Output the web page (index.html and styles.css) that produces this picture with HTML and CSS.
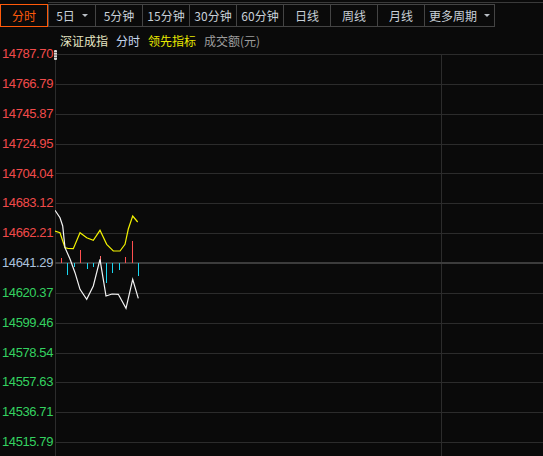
FILE: index.html
```html
<!DOCTYPE html>
<html lang="zh-CN">
<head>
<meta charset="utf-8">
<title>分时</title>
<link rel="stylesheet" href="styles.css">
</head>
<body>
<div class="topline"></div>
<div class="tabs">
  <div class="tab active">分时</div>
  <div class="tab">5日<span class="caret"></span></div>
  <div class="tab">5分钟</div>
  <div class="tab">15分钟</div>
  <div class="tab">30分钟</div>
  <div class="tab">60分钟</div>
  <div class="tab">日线</div>
  <div class="tab">周线</div>
  <div class="tab">月线</div>
  <div class="tab wide">更多周期<span class="caret"></span></div>
</div>
<div class="legend">
  <span class="lg-index">深证成指</span>
  <span class="lg-time">分时</span>
  <span class="lg-lead">领先指标</span>
  <span class="lg-amount">成交额(元)</span>
</div>
<div class="chart">
  <ul class="yaxis">
    <li class="up">14787.70</li>
    <li class="up">14766.79</li>
    <li class="up">14745.87</li>
    <li class="up">14724.95</li>
    <li class="up">14704.04</li>
    <li class="up">14683.12</li>
    <li class="up">14662.21</li>
    <li class="mid">14641.29</li>
    <li class="down">14620.37</li>
    <li class="down">14599.46</li>
    <li class="down">14578.54</li>
    <li class="down">14557.63</li>
    <li class="down">14536.71</li>
    <li class="down">14515.79</li>
  </ul>
  <span class="grip">
    <svg width="5" height="10" viewBox="0 0 5 10">
      <rect x="1" y="0" width="3" height="10" rx="1" fill="#d8d8d8"/>
      <rect x="1" y="2" width="3" height="1" fill="#6a6a6a"/>
      <rect x="1" y="4.5" width="3" height="1" fill="#6a6a6a"/>
      <rect x="1" y="7" width="3" height="1" fill="#6a6a6a"/>
    </svg>
  </span>
  <div class="plot">
    <svg class="plot-svg" width="488" height="403" viewBox="0 0 488 403">
      <g stroke="#2c2c2c" stroke-width="1" shape-rendering="crispEdges">
        <line x1="0" y1="0.5" x2="488" y2="0.5"/>
        <line x1="0" y1="30.35" x2="488" y2="30.35"/>
        <line x1="0" y1="60.2" x2="488" y2="60.2"/>
        <line x1="0" y1="90.05" x2="488" y2="90.05"/>
        <line x1="0" y1="119.9" x2="488" y2="119.9"/>
        <line x1="0" y1="149.75" x2="488" y2="149.75"/>
        <line x1="0" y1="179.6" x2="488" y2="179.6"/>
        <line x1="0" y1="239.3" x2="488" y2="239.3"/>
        <line x1="0" y1="269.15" x2="488" y2="269.15"/>
        <line x1="0" y1="299" x2="488" y2="299"/>
        <line x1="0" y1="328.85" x2="488" y2="328.85"/>
        <line x1="0" y1="358.7" x2="488" y2="358.7"/>
        <line x1="0" y1="388.55" x2="488" y2="388.55"/>
        <line x1="0.5" y1="0" x2="0.5" y2="403"/>
        <line x1="386.5" y1="0" x2="386.5" y2="403"/>
      </g>
      <rect x="0" y="208" width="488" height="2" fill="#3c3c3c" shape-rendering="crispEdges"/>
      <g stroke-width="1" shape-rendering="crispEdges">
        <line x1="6.5" y1="203.5" x2="6.5" y2="209" stroke="#ff4f4f"/>
        <line x1="25.5" y1="196" x2="25.5" y2="209" stroke="#ff4f4f"/>
        <line x1="45.5" y1="202" x2="45.5" y2="209" stroke="#ff6b6b"/>
        <line x1="70.5" y1="202.5" x2="70.5" y2="209" stroke="#ff4f4f"/>
        <line x1="77.5" y1="187" x2="77.5" y2="209" stroke="#ff4f4f"/>
        <line x1="12.5" y1="209" x2="12.5" y2="220.5" stroke="#19d6f0"/>
        <line x1="19.5" y1="209" x2="19.5" y2="213" stroke="#19d6f0"/>
        <line x1="32.5" y1="209" x2="32.5" y2="214.5" stroke="#19d6f0"/>
        <line x1="38.5" y1="209" x2="38.5" y2="213" stroke="#19d6f0"/>
        <line x1="51.5" y1="209" x2="51.5" y2="228.5" stroke="#19d6f0"/>
        <line x1="57.5" y1="209" x2="57.5" y2="218.5" stroke="#19d6f0"/>
        <line x1="64.5" y1="209" x2="64.5" y2="215.5" stroke="#19d6f0"/>
        <line x1="83.5" y1="209" x2="83.5" y2="222" stroke="#19d6f0"/>
      </g>
      <polyline fill="none" stroke="#f2f200" stroke-width="1.2" points="0,177 5,178.7 10,193.7 13.3,194.5 18.3,194.7 25,178.7 31.7,183.7 38.3,186.3 45,176.3 51.7,190.3 58.3,197 65,197 70,190.3 73.3,175 77.7,162 82.7,168"/>
      <polyline fill="none" stroke="#f4f4f4" stroke-width="1.2" points="0,156.3 5,163.7 7.7,172 10,193.7 15,205 20,218.7 25,235.3 31.7,245.3 38.3,232 45,205.3 51,242 57,240 63.3,240.3 71,254.3 77.7,225.3 83.3,244.3"/>
    </svg>
  </div>
</div>
</body>
</html>
```
FILE: styles.css
```css
html, body {
  margin: 0;
  padding: 0;
}
body {
  width: 543px;
  height: 456px;
  overflow: hidden;
  background: #0a0a0a;
  font-family: "Noto Sans CJK SC", "Liberation Sans", sans-serif;
  font-size: 12px;
}
.topline {
  height: 1px;
  margin: 2px 0 0 48px;
  background: #3a3a3a;
}
.tabs {
  display: flex;
  margin-top: 1px;
  height: 23px;
}
.tab {
  box-sizing: border-box;
  width: 48px;
  height: 23px;
  margin-left: -1px;
  border: 1px solid #444;
  color: #c8d0d8;
  display: flex;
  align-items: center;
  justify-content: center;
  line-height: 21px;
  white-space: nowrap;
}
.tab:first-child {
  margin-left: 0;
  width: 48px;
}
.tab.active {
  border-color: #ff5a0a;
  color: #ff5a0a;
  position: relative;
  z-index: 1;
}
.tab.active + .tab {
  margin-left: 0;
}
.tab.wide {
  width: 71px;
}
.caret {
  display: inline-block;
  width: 0;
  height: 0;
  margin-left: 7px;
  border-left: 3px solid transparent;
  border-right: 3px solid transparent;
  border-top: 3px solid #b8bec4;
}
.legend {
  height: 26px;
  line-height: 26px;
  padding-left: 60px;
  margin-top: 1px;
  display: flex;
  gap: 8px;
  white-space: nowrap;
}
.lg-index { color: #e6e6c4; }
.lg-time { color: #c6d6ee; }
.lg-lead { color: #e8e800; }
.lg-amount { color: #9c9c9c; }
.chart {
  display: flex;
  height: 403px;
  position: relative;
}
.yaxis {
  list-style: none;
  margin: -14.8px 0 0 0;
  padding: 0 2px 0 0;
  width: 53px;
  flex: none;
  font-family: "Liberation Sans", sans-serif;
  font-size: 13px;
  letter-spacing: -0.4px;
  text-align: right;
}
.yaxis li {
  height: 29.85px;
  line-height: 29.85px;
}
.up { color: #f24a4a; }
.mid { color: #aac2de; }
.down { color: #34d260; }
.grip {
  position: absolute;
  left: 53px;
  top: -4px;
  width: 5px;
  height: 10px;
  line-height: 0;
}
.plot {
  flex: 1;
  line-height: 0;
}
.plot-svg {
  display: block;
}
```
